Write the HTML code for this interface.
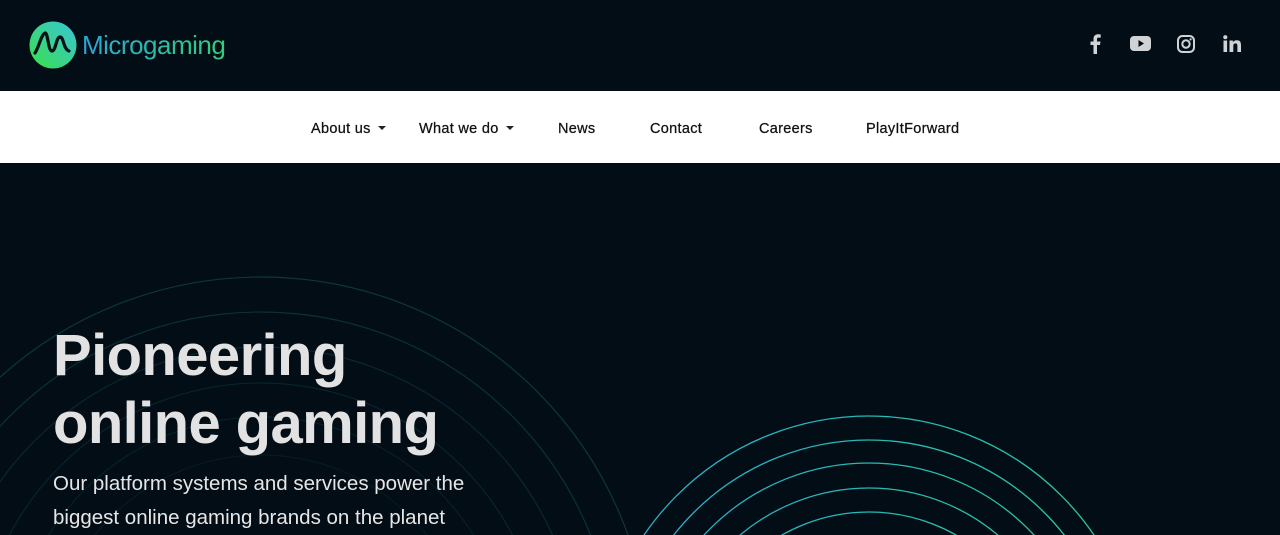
<!DOCTYPE html>
<html><head><meta charset="utf-8"><style>
*{margin:0;padding:0;box-sizing:border-box}
html,body{width:1280px;height:535px;overflow:hidden}
body{background:#020d16;font-family:"Liberation Sans",sans-serif;position:relative}
.top{height:91px;background:#020d16;position:relative}
.logo{position:absolute;left:29px;top:21px}
.brand{position:absolute;left:82px;top:30px;font-size:26px;letter-spacing:-0.5px;background:linear-gradient(90deg,#2aa6d6,#2fd07a);-webkit-background-clip:text;color:transparent}
.soc{position:absolute;top:34px;fill:#cfd3d6}
nav{position:absolute;top:91px;left:0;width:1280px;height:72px;background:#fff}
nav span{position:absolute;top:30px;font-size:14.5px;color:#111;letter-spacing:.3px;-webkit-text-stroke:.25px #111}
.caret{display:inline-block;width:0;height:0;border-left:4px solid transparent;border-right:4px solid transparent;border-top:4px solid #222;margin-left:7px;vertical-align:3px}
h1{position:absolute;left:53px;top:322px;font-size:58px;line-height:68px;color:#e2e2e2;font-weight:bold;letter-spacing:-0.6px}
p{position:absolute;left:53px;top:467px;font-size:20.5px;line-height:34px;color:#e6e6e6}
svg.bg{position:absolute;left:0;top:0}
</style></head><body>
<svg class="bg" width="1280" height="535">
<g fill="none" stroke="#0e3b40" stroke-width="1.2">
<circle cx="261" cy="667" r="390" opacity=".9"/>
<circle cx="261" cy="667" r="355" opacity=".8"/>
<circle cx="261" cy="667" r="320" opacity=".6"/>
<circle cx="261" cy="667" r="284" opacity=".5"/>
<circle cx="261" cy="667" r="250" opacity=".4"/>
<circle cx="261" cy="667" r="212" opacity=".3"/>
</g>
<defs><linearGradient id="rg" x1="0" x2="1"><stop offset="0" stop-color="#2aa9c9"/><stop offset="1" stop-color="#25c9a0"/></linearGradient></defs>
<g fill="none" stroke="url(#rg)" stroke-width="1.3">
<circle cx="869" cy="688" r="272"/>
<circle cx="869" cy="688" r="248"/>
<circle cx="869" cy="688" r="225"/>
<circle cx="869" cy="688" r="200"/>
<circle cx="869" cy="688" r="176"/>
</g>
</svg>
<div class="top">
<svg class="logo" width="48" height="48" viewBox="0 0 48 48"><defs><linearGradient id="lg" x1="0" y1="1" x2="1" y2="0"><stop offset="0" stop-color="#37e04a"/><stop offset="1" stop-color="#3bc4d8"/></linearGradient></defs><circle cx="24" cy="24" r="23.5" fill="url(#lg)"/><path d="M6 32 C10 26 12 14 16 12 C19 11 19 30 23 30 C27 30 27 16 31 16 C35 16 34 28 40 30" fill="none" stroke="#06121a" stroke-width="3.2" stroke-linecap="round"/></svg>
<div class="brand">Microgaming</div>
<svg class="soc" style="left:1088px" width="14" height="20" viewBox="0 0 14 20"><path d="M9 20V11h3l.5-3.5H9V5.3c0-1 .3-1.7 1.8-1.7h1.9V.5C12.3.4 11.2.3 10 .3 7.3.3 5.5 2 5.5 5v2.5h-3V11h3v9z"/></svg>
<svg class="soc" style="left:1130px;top:36px" width="21" height="16" viewBox="0 0 21 16"><rect width="21" height="15" rx="4"/><path d="M8.5 4v7l5.5-3.5z" fill="#020d16"/></svg>
<svg class="soc" style="left:1177px;top:35px" width="18" height="18" viewBox="0 0 18 18"><rect x="1" y="1" width="16" height="16" rx="4.5" fill="none" stroke="#cfd3d6" stroke-width="2"/><circle cx="9" cy="9" r="3.7" fill="none" stroke="#cfd3d6" stroke-width="2"/><circle cx="13.6" cy="4.4" r="1.1"/></svg>
<svg class="soc" style="left:1223px;top:35px" width="18" height="17" viewBox="0 0 18 17"><rect x="0.5" y="5.5" width="3.6" height="11.5"/><circle cx="2.3" cy="2.2" r="2.1"/><path d="M6.5 5.5h3.4v1.7c.6-1 1.9-2 3.9-2 3.6 0 4.2 2.3 4.2 5.3V17h-3.6v-5.6c0-1.3 0-3-1.900-3s-2.2 1.5-2.2 3V17H6.5z"/></svg>
</div>
<nav>
<span style="left:311px">About us<i class="caret"></i></span>
<span style="left:419px">What we do<i class="caret"></i></span>
<span style="left:558px">News</span>
<span style="left:650px">Contact</span>
<span style="left:759px">Careers</span>
<span style="left:866px">PlayItForward</span>
</nav>
<h1>Pioneering<br>online gaming</h1>
<p>Our platform systems and services power the<br>biggest online gaming brands on the planet</p>
</body></html>
